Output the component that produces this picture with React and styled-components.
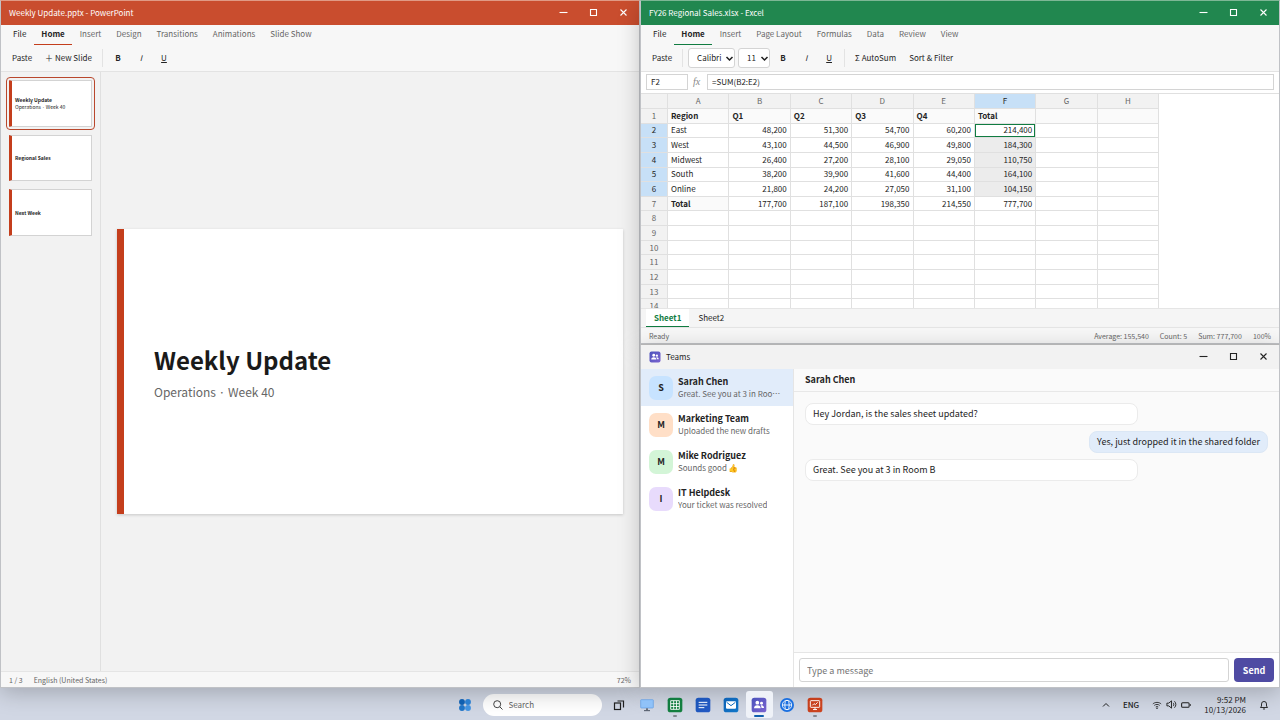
import React from 'react';
import styled, { createGlobalStyle, css } from 'styled-components';

const GlobalStyle = createGlobalStyle`
  * {
    box-sizing: border-box;
  }
  html, body, #root {
    height: 100%;
    margin: 0;
  }
  body, button, input, select {
    font-family: "Noto Sans CJK JP", "Noto Color Emoji", sans-serif;
    font-size: 8px;
    color: #242424;
  }
  button {
    border: 0;
    padding: 0;
    background: none;
  }
  h1, h2, p, ul {
    margin: 0;
    padding: 0;
    list-style: none;
  }
`;

const Desktop = styled.div`
  height: 100vh;
  display: flex;
  flex-direction: column;
  background: #d1d7e4;
  overflow: hidden;
`;

const Windows = styled.main`
  flex: 1;
  min-height: 0;
  display: grid;
  grid-template-columns: 1fr 1fr;
  grid-template-rows: 1fr 1fr;
`;

const Window = styled.section`
  grid-row: ${(props) => (props.$tall ? 'span 2' : 'auto')};
  position: relative;
  display: flex;
  flex-direction: column;
  min-width: 0;
  min-height: 0;
  border: 1px solid #c0c2c6;
  border-top-color: ${(props) => props.$edge};
  background: #fff;
  box-shadow: 0 5px 21px rgba(0, 0, 0, 0.22);
`;

const TitleBar = styled.header`
  flex: none;
  height: 24px;
  display: flex;
  align-items: center;
  gap: 5px;
  padding: 0 1px 1px 8px;
  background: ${(props) => props.$bg};
  color: ${(props) => props.$fg};
`;

const Title = styled.h1`
  flex: 1;
  font-size: 8px;
  font-weight: 400;
`;

const CaptionRow = styled.div`
  display: flex;
`;

const CaptionButton = styled.button`
  width: 30px;
  height: 23px;
  display: grid;
  place-items: center;
  color: inherit;
`;

const Tabs = styled.nav`
  flex: none;
  height: 20px;
  display: flex;
  gap: 1px;
  padding: 0 5px;
  background: #f7f7f7;
`;

const Tab = styled.button`
  padding: 0 7px 2px;
  border-bottom: 1px solid transparent;
  color: #666;
  ${(props) => props.$dark && css`color: #242424;`}
  ${(props) =>
    props.$accent &&
    css`
      color: #242424;
      font-weight: 600;
      border-bottom-color: ${props.$accent};
    `}
`;

const Toolbar = styled.div`
  flex: none;
  height: 27px;
  display: flex;
  align-items: center;
  gap: 1px;
  padding: 0 5px;
  background: #f7f7f7;
  border-bottom: 1px solid #e3e3e3;
`;

const Tool = styled.button`
  min-width: 22px;
  height: 20px;
  padding: 0 6px 1px;
  font-weight: ${(props) => (props.$bold ? 700 : 400)};
  font-style: ${(props) => (props.$italic ? 'italic' : 'normal')};
  text-decoration: ${(props) => (props.$underline ? 'underline' : 'none')};
`;

const Divider = styled.span`
  width: 1px;
  height: 18px;
  margin: 0 3px;
  background: #e3e3e3;
`;

const SelectBox = styled.label`
  display: grid;
  align-items: center;
  margin: 0 1px;

  > * {
    grid-area: 1 / 1;
  }
  svg {
    justify-self: end;
    margin-right: 1px;
    pointer-events: none;
  }
`;

const Select = styled.select`
  appearance: none;
  width: ${(props) => props.$width};
  height: 20px;
  padding: 0 8px 1px;
  border: 1px solid #d4d4d4;
  border-radius: 3px;
  background: #fff;
`;

const StatusBar = styled.footer`
  flex: none;
  height: 16px;
  display: flex;
  align-items: center;
  gap: 11px;
  padding: 0 8px;
  border-top: 1px solid #e5e5e5;
  background: #f7f7f7;
  color: #666;
  font-size: 7px;
`;

const Spacer = styled.span`
  flex: 1;
`;

/* PowerPoint */

const DeckBody = styled.div`
  flex: 1;
  min-height: 0;
  display: flex;
  background: #f2f2f2;
`;

const ThumbRail = styled.aside`
  flex: none;
  width: 100px;
  display: flex;
  flex-direction: column;
  gap: 8px;
  padding: 8px;
  border-right: 1px solid #e0e0e0;
`;

const Thumb = styled.button`
  aspect-ratio: 16 / 9;
  display: flex;
  flex-direction: column;
  justify-content: center;
  padding: 0 3px 1px;
  border: 1px solid #d3d3d3;
  border-left: 3px solid #c43e1c;
  background: #fff;
  font-size: 5px;
  line-height: 7px;
  text-align: left;
  ${(props) =>
    props.$active &&
    css`
      border-radius: 1px;
      outline: 1px solid #b9472c;
      outline-offset: 2px;
    `}
`;

const Canvas = styled.div`
  flex: 1;
  display: grid;
  align-items: center;
  padding: 16px;
`;

const Slide = styled.article`
  aspect-ratio: 16 / 9;
  display: flex;
  flex-direction: column;
  justify-content: center;
  gap: 6px;
  padding: 0 30px 1px;
  border-left: 7px solid #c43e1c;
  background: #fff;
  box-shadow: 0 1px 3px rgba(0, 0, 0, 0.18);
`;

const SlideTitle = styled.h2`
  font-size: 24px;
  line-height: 35px;
  font-weight: 600;
  color: #1a1a1a;
`;

const SlideText = styled.p`
  font-size: 12px;
  line-height: 17px;
  color: #666;
`;

/* Excel */

const FormulaBar = styled.div`
  flex: none;
  display: flex;
  align-items: center;
  gap: 5px;
  padding: 2px 5px 3px;
  border-bottom: 1px solid #e0e0e0;
`;

const Cell = styled.input`
  height: 16px;
  min-width: 0;
  padding: 0 4px 1px;
  border: 1px solid #d4d4d4;
  background: #fff;
  ${(props) => (props.$wide ? 'flex: 1;' : 'width: 42px;')}
`;

const Fx = styled.span`
  width: 9px;
  font-family: "Liberation Serif", serif;
  font-size: 10px;
  line-height: 12px;
  font-style: italic;
  color: #888;
`;

const SheetArea = styled.div`
  flex: 1;
  min-height: 0;
  overflow: hidden;
`;

const Sheet = styled.table`
  width: 518px;
  height: 220px;
  table-layout: fixed;
  border-collapse: separate;
  border-spacing: 0;
  line-height: 12px;

  thead th {
    height: 15px;
  }
  th, td {
    padding: 0 3px;
    border-right: 1px solid #e0e0e0;
    border-bottom: 1px solid #e0e0e0;
    white-space: nowrap;
  }
`;

const HeadCell = styled.th`
  width: ${(props) => props.$width || 'auto'};
  font-weight: 400;
  color: ${(props) => (props.$on ? '#242424' : '#666')};
  background: ${(props) => (props.$on ? '#c7e0f7' : '#f2f2f2')};
`;

const DataCell = styled.td`
  text-align: ${(props) => (props.$num ? 'right' : 'left')};
  font-weight: ${(props) => (props.$bold ? 700 : 400)};
  ${(props) => props.$shade && css`background: ${props.$shade};`}
  ${(props) => props.$cursor && css`box-shadow: inset 0 0 0 1px #107c41;`}
`;

const SheetTabs = styled.div`
  flex: none;
  height: 19px;
  display: flex;
  gap: 1px;
  padding: 0 5px;
  border-top: 1px solid #e5e5e5;
  background: #f5f5f5;
`;

const SheetTab = styled.button`
  padding: 0 8px;
  border-bottom: 1px solid transparent;
  ${(props) =>
    props.$active &&
    css`
      background: #fff;
      color: #107c41;
      font-weight: 600;
      border-bottom-color: #107c41;
    `}
`;

/* Teams */

const TeamsBody = styled.div`
  flex: 1;
  min-height: 0;
  display: flex;
`;

const ChatList = styled.ul`
  flex: none;
  width: 153px;
  border-right: 1px solid #e5e5e5;
`;

const ChatRow = styled.button`
  width: 100%;
  height: 37px;
  display: flex;
  align-items: center;
  gap: 5px;
  padding: 0 12px 0 8px;
  text-align: left;
  background: ${(props) => (props.$active ? '#e1ecfa' : 'transparent')};
`;

const Avatar = styled.span`
  flex: none;
  width: 24px;
  height: 24px;
  display: grid;
  place-items: center;
  border-radius: 7px;
  background: ${(props) => props.$bg};
  font-size: 9px;
  font-weight: 600;
`;

const ChatText = styled.span`
  min-width: 0;
  display: flex;
  flex-direction: column;
  line-height: 12px;

  strong {
    font-size: 9px;
    font-weight: 600;
  }
  span {
    overflow: hidden;
    white-space: nowrap;
    text-overflow: ellipsis;
    color: #666;
  }
`;

const Conversation = styled.div`
  flex: 1;
  min-width: 0;
  display: flex;
  flex-direction: column;
  background: #fafafa;
`;

const ChatHeader = styled.h2`
  flex: none;
  height: 23px;
  padding: 0 11px;
  border-bottom: 1px solid #e8e8e8;
  font-size: 9px;
  line-height: 22px;
  font-weight: 600;
`;

const Messages = styled.div`
  flex: 1;
  display: flex;
  flex-direction: column;
  align-items: flex-start;
  gap: 6px;
  padding: 11px;
`;

const Bubble = styled.p`
  padding: 0 7px;
  border: 1px solid #ebebeb;
  border-radius: 8px;
  background: #fff;
  font-size: 9px;
  line-height: 20px;
  width: 72%;
  ${(props) =>
    props.$mine &&
    css`
      width: auto;
      align-self: flex-end;
      background: #e1ecfa;
      border-color: #dbe7f5;
    `}
`;

const Composer = styled.form`
  flex: none;
  display: flex;
  gap: 5px;
  padding: 5px;
  border-top: 1px solid #e5e5e5;
  background: #fff;
`;

const MessageInput = styled.input`
  flex: 1;
  min-width: 0;
  height: 24px;
  padding: 0 7px;
  border: 1px solid #d4d4d4;
  border-radius: 3px;
  font-size: 9px;

  &::placeholder {
    color: #757575;
  }
`;

const SendButton = styled.button`
  width: 40px;
  height: 24px;
  border-radius: 4px;
  background: #4f4ba3;
  color: #fff;
  font-size: 9px;
  font-weight: 600;
`;

/* Taskbar */

const Taskbar = styled.footer`
  flex: none;
  height: 32px;
  padding-top: 1px;
  display: grid;
  grid-template-columns: 1fr auto 1fr;
  align-items: center;
  background: #d1d7e4;
`;

const TaskItems = styled.div`
  grid-column: 2;
  display: flex;
  align-items: center;
  gap: 1px;
`;

const TaskButton = styled.button`
  position: relative;
  width: 27px;
  height: 27px;
  display: grid;
  place-items: center;
  border-radius: 3px;
  background: ${(props) => (props.$active ? '#eff2f8' : 'transparent')};

  ${(props) =>
    props.$open &&
    css`
      &::after {
        content: '';
        position: absolute;
        bottom: 1px;
        left: 50%;
        width: ${props.$active ? '10px' : '4px'};
        height: 2px;
        transform: translateX(-50%);
        border-radius: 1px;
        background: ${props.$active ? '#0f5fae' : '#858992'};
      }
    `}
`;

const SearchBox = styled.label`
  width: 119px;
  height: 22px;
  margin: 0 3px;
  padding: 0 10px;
  display: flex;
  align-items: center;
  gap: 6px;
  border-radius: 11px;
  background: #fff;

  input {
    flex: 1;
    min-width: 0;
    padding: 0;
    border: 0;
    background: none;
  }
  input::placeholder {
    color: #666;
  }
`;

const Tray = styled.div`
  display: flex;
  justify-content: flex-end;
  align-items: center;
  gap: 5px;
  padding-right: 7px;
`;

const TrayButton = styled.button`
  height: 24px;
  padding: 0 4px;
  display: flex;
  align-items: center;
  gap: 4px;
  text-align: right;
  line-height: 10px;
  font-weight: ${(props) => (props.$strong ? 500 : 400)};
`;

const Tile = ({ from, to, size = 16, children }) => {
  const id = `tile${from.slice(1)}`;
  return (
    <svg width={size} height={size} viewBox="0 0 24 24" fill="none">
      <defs>
        <linearGradient id={id} x1="0" y1="0" x2="1" y2="1">
          <stop offset="0" stopColor={from} />
          <stop offset="1" stopColor={to} />
        </linearGradient>
      </defs>
      <rect x="1" y="1" width="22" height="22" rx="4" fill={`url(#${id})`} />
      {children}
    </svg>
  );
};

const TeamsIcon = ({ size }) => (
  <Tile from="#4b53bc" to="#7b63cf" size={size}>
    <circle cx="9.5" cy="8.5" r="2.8" fill="#fff" />
    <circle cx="15.8" cy="9.3" r="2.2" fill="#fff" />
    <path d="M4.5 17c0-3 2-4.500 5-4.500s5 1.500 5 4.500z" fill="#fff" />
    <path d="M15.800 16.500c0-1.600-.4-2.700-1.300-3.800 3-.7 5 .8 5 3.800z" fill="#fff" />
  </Tile>
);

const ExcelIcon = () => (
  <Tile from="#107c41" to="#15803f">
    <path d="M5.500 5.500h13v13h-13zM5.500 10h13M5.500 14.300h13M10 5.500v13M14.300 5.500v13" stroke="#fff" strokeWidth="1.300" />
  </Tile>
);

const WriterIcon = () => (
  <Tile from="#1b55b8" to="#2459c4">
    <path d="M5.500 8h13M5.500 12h13M5.500 16h8.500" stroke="#fff" strokeWidth="1.500" />
  </Tile>
);

const MailIcon = () => (
  <Tile from="#0f62b5" to="#1177c9">
    <rect x="4.500" y="6.500" width="15" height="11" rx="1.500" fill="#fff" />
    <path d="M5.500 8l6.500 5 6.500-5" stroke="#0f6cbd" strokeWidth="1.500" />
  </Tile>
);

const SlidesIcon = () => (
  <Tile from="#c43e1c" to="#cc4420">
    <rect x="5" y="5.500" width="14" height="10" rx="1" stroke="#fff" strokeWidth="1.400" />
    <path d="M8 12.500l2.500-2.500 2 1.500 3.500-3.500M12 15.500v3M9 18.800h6" stroke="#fff" strokeWidth="1.400" />
  </Tile>
);

const GlobeIcon = () => (
  <svg width="16" height="16" viewBox="0 0 24 24" fill="none" stroke="#fff" strokeWidth="1.300">
    <circle cx="12" cy="12" r="10.500" fill="#1a6fe0" stroke="none" />
    <circle cx="12" cy="12" r="7" />
    <ellipse cx="12" cy="12" rx="3.200" ry="7" />
    <path d="M5 12h14" />
  </svg>
);

const MonitorIcon = () => (
  <svg width="16" height="16" viewBox="0 0 24 24" fill="none">
    <rect x="2.500" y="4" width="19" height="12.500" rx="1" fill="#90c2f9" stroke="#5d9ce2" />
    <path d="M12 17v3" stroke="#6b7280" strokeWidth="3" />
    <path d="M7.500 20.500h9" stroke="#4b5563" strokeWidth="1.500" />
  </svg>
);

const StartIcon = () => (
  <svg width="16" height="16" viewBox="0 0 24 24">
    <circle cx="7.500" cy="7.500" r="4.400" fill="#0f5fb0" />
    <circle cx="16.500" cy="7.500" r="4.400" fill="#2b7fd0" />
    <circle cx="7.500" cy="16.500" r="4.400" fill="#1f74c6" />
    <circle cx="16.500" cy="16.500" r="4.400" fill="#4292de" />
  </svg>
);

const TaskViewIcon = () => (
  <svg width="12" height="12" viewBox="0 0 12 12" fill="none" stroke="#1f1f1f" strokeWidth="1.200">
    <rect x="1.500" y="4" width="6" height="6.500" />
    <path d="M4.500 2h6v6.500" />
  </svg>
);

const SearchIcon = () => (
  <svg width="10" height="10" viewBox="0 0 10 10" fill="none" stroke="#444">
    <circle cx="4.200" cy="4.200" r="3.500" />
    <path d="M6.800 6.800L9.500 9.500" />
  </svg>
);

const Chevron = () => (
  <svg width="9" height="9" viewBox="0 0 9 9" fill="none" stroke="#1f1f1f" strokeWidth="1.500">
    <path d="M1.500 3l3 3 3-3" />
  </svg>
);

const captionIcons = [
  ['Minimize', 'M0.500 4.500h8'],
  ['Maximize', 'M1.500 1.500h6v6h-6z'],
  ['Close', 'M1.500 1.500l6 6M7.500 1.500l-6 6'],
];

const WindowBar = ({ title, bg, fg = '#fff', icon }) => (
  <TitleBar $bg={bg} $fg={fg}>
    {icon}
    <Title>{title}</Title>
    <CaptionRow>
      {captionIcons.map(([name, d]) => (
        <CaptionButton key={name} aria-label={name}>
          <svg width="9" height="9" viewBox="0 0 9 9" fill="none" stroke="currentColor" strokeWidth="1.100">
            <path d={d} />
          </svg>
        </CaptionButton>
      ))}
    </CaptionRow>
  </TitleBar>
);

const RibbonTabs = ({ names, accent }) => (
  <Tabs>
    {names.map((name) => (
      <Tab key={name} $dark={name === 'File'} $accent={name === 'Home' ? accent : undefined}>
        {name}
      </Tab>
    ))}
  </Tabs>
);

const FormatTools = () => (
  <>
    <Tool $bold>B</Tool>
    <Tool $italic>I</Tool>
    <Tool $underline>U</Tool>
  </>
);

const slides = [
  { title: 'Weekly Update', text: 'Operations · Week 40' },
  { title: 'Regional Sales' },
  { title: 'Next Week' },
];

const PowerPoint = () => (
  <Window $tall $edge="#e09a85">
    <WindowBar title="Weekly Update.pptx - PowerPoint" bg="#c94d2e" />
    <RibbonTabs
      accent="#c43e1c"
      names={['File', 'Home', 'Insert', 'Design', 'Transitions', 'Animations', 'Slide Show']}
    />
    <Toolbar>
      <Tool>Paste</Tool>
      <Tool>＋ New Slide</Tool>
      <Divider />
      <FormatTools />
    </Toolbar>
    <DeckBody>
      <ThumbRail>
        {slides.map((slide, i) => (
          <Thumb key={slide.title} $active={i === 0}>
            <strong>{slide.title}</strong>
            {slide.text && <span>{slide.text}</span>}
          </Thumb>
        ))}
      </ThumbRail>
      <Canvas>
        <Slide>
          <SlideTitle>{slides[0].title}</SlideTitle>
          <SlideText>{slides[0].text}</SlideText>
        </Slide>
      </Canvas>
    </DeckBody>
    <StatusBar>
      <span>1 / 3</span>
      <span>English (United States)</span>
      <Spacer />
      <span>72%</span>
    </StatusBar>
  </Window>
);

const columns = ['A', 'B', 'C', 'D', 'E', 'F', 'G', 'H'];
const data = [
  ['Region', 'Q1', 'Q2', 'Q3', 'Q4', 'Total'],
  ['East', '48,200', '51,300', '54,700', '60,200', '214,400'],
  ['West', '43,100', '44,500', '46,900', '49,800', '184,300'],
  ['Midwest', '26,400', '27,200', '28,100', '29,050', '110,750'],
  ['South', '38,200', '39,900', '41,600', '44,400', '164,100'],
  ['Online', '21,800', '24,200', '27,050', '31,100', '104,150'],
  ['Total', '177,700', '187,100', '198,350', '214,550', '777,700'],
];
const rows = Array.from({ length: 14 }, (_, i) => data[i] || []);

const inSelection = (r, c) => c === 5 && r >= 1 && r <= 5;

const cellShade = (r, c) => {
  if (r === 0 || (r === 6 && c === 0)) return '#fafafa';
  if (inSelection(r, c) && r > 1) return '#ececec';
  return undefined;
};

const Excel = () => (
  <Window $edge="#7db795">
    <WindowBar title="FY26 Regional Sales.xlsx - Excel" bg="#21874f" />
    <RibbonTabs
      accent="#107c41"
      names={['File', 'Home', 'Insert', 'Page Layout', 'Formulas', 'Data', 'Review', 'View']}
    />
    <Toolbar>
      <Tool>Paste</Tool>
      <Divider />
      <SelectBox>
        <Select $width="47px" aria-label="Font">
          <option>Calibri</option>
        </Select>
        <Chevron />
      </SelectBox>
      <SelectBox>
        <Select $width="32px" aria-label="Font size">
          <option>11</option>
        </Select>
        <Chevron />
      </SelectBox>
      <FormatTools />
      <Divider />
      <Tool>Σ AutoSum</Tool>
      <Tool>Sort &amp; Filter</Tool>
    </Toolbar>
    <FormulaBar>
      <Cell aria-label="Name box" defaultValue="F2" />
      <Fx>fx</Fx>
      <Cell $wide aria-label="Formula" defaultValue="=SUM(B2:E2)" />
    </FormulaBar>
    <SheetArea>
      <Sheet>
        <thead>
          <tr>
            <HeadCell $width="27px" />
            {columns.map((name) => (
              <HeadCell key={name} $on={name === 'F'}>{name}</HeadCell>
            ))}
          </tr>
        </thead>
        <tbody>
          {rows.map((row, r) => (
            <tr key={r}>
              <HeadCell $on={inSelection(r, 5)}>{r + 1}</HeadCell>
              {columns.map((name, c) => (
                <DataCell
                  key={name}
                  $num={r > 0 && c > 0}
                  $bold={r === 0 || (r === 6 && c === 0)}
                  $shade={cellShade(r, c)}
                  $cursor={r === 1 && c === 5}
                >
                  {row[c]}
                </DataCell>
              ))}
            </tr>
          ))}
        </tbody>
      </Sheet>
    </SheetArea>
    <SheetTabs>
      <SheetTab $active>Sheet1</SheetTab>
      <SheetTab>Sheet2</SheetTab>
    </SheetTabs>
    <StatusBar>
      <span>Ready</span>
      <Spacer />
      <span>Average: 155,540</span>
      <span>Count: 5</span>
      <span>Sum: 777,700</span>
      <span>100%</span>
    </StatusBar>
  </Window>
);

const chats = [
  { name: 'Sarah Chen', last: 'Great. See you at 3 in Room B', bg: '#c7e3ff' },
  { name: 'Marketing Team', last: 'Uploaded the new drafts', bg: '#ffdfc7' },
  { name: 'Mike Rodriguez', last: 'Sounds good 👍', bg: '#d3f5d7' },
  { name: 'IT Helpdesk', last: 'Your ticket was resolved', bg: '#e8dbfc' },
];

const Teams = () => (
  <Window $edge="#b4b4b4">
    <WindowBar title="Teams" bg="#f2f2f2" fg="#242424" icon={<TeamsIcon size={12} />} />
    <TeamsBody>
      <ChatList>
        {chats.map((chat, i) => (
          <li key={chat.name}>
            <ChatRow $active={i === 0}>
              <Avatar $bg={chat.bg}>{chat.name[0]}</Avatar>
              <ChatText>
                <strong>{chat.name}</strong>
                <span>{chat.last}</span>
              </ChatText>
            </ChatRow>
          </li>
        ))}
      </ChatList>
      <Conversation>
        <ChatHeader>Sarah Chen</ChatHeader>
        <Messages>
          <Bubble>Hey Jordan, is the sales sheet updated?</Bubble>
          <Bubble $mine>Yes, just dropped it in the shared folder</Bubble>
          <Bubble>Great. See you at 3 in Room B</Bubble>
        </Messages>
        <Composer onSubmit={(e) => e.preventDefault()}>
          <MessageInput aria-label="Message" placeholder="Type a message" />
          <SendButton>Send</SendButton>
        </Composer>
      </Conversation>
    </TeamsBody>
  </Window>
);

const apps = [
  { name: 'Task view', icon: <TaskViewIcon /> },
  { name: 'Computer', icon: <MonitorIcon /> },
  { name: 'Excel', icon: <ExcelIcon />, open: true },
  { name: 'Writer', icon: <WriterIcon /> },
  { name: 'Mail', icon: <MailIcon /> },
  { name: 'Teams', icon: <TeamsIcon size={16} />, open: true, active: true },
  { name: 'Browser', icon: <GlobeIcon /> },
  { name: 'PowerPoint', icon: <SlidesIcon />, open: true },
];

const App = () => {
  return (
    <Desktop>
      <GlobalStyle />
      <Windows>
        <PowerPoint />
        <Excel />
        <Teams />
      </Windows>
      <Taskbar>
        <TaskItems>
          <TaskButton aria-label="Start"><StartIcon /></TaskButton>
          <SearchBox>
            <SearchIcon />
            <input aria-label="Search" placeholder="Search" />
          </SearchBox>
          {apps.map((app) => (
            <TaskButton key={app.name} aria-label={app.name} $open={app.open} $active={app.active}>
              {app.icon}
            </TaskButton>
          ))}
        </TaskItems>
        <Tray>
          <TrayButton aria-label="Hidden icons">
            <svg width="8" height="8" viewBox="0 0 8 8" fill="none" stroke="#1f1f1f">
              <path d="M1 5.500l3-3 3 3" />
            </svg>
          </TrayButton>
          <TrayButton $strong>ENG</TrayButton>
          <TrayButton aria-label="Network, sound, battery">
            <svg width="10" height="10" viewBox="0 0 24 24" fill="none" stroke="#1f1f1f" strokeWidth="2">
              <path d="M2 9.500c5.500-5 14.500-5 20 0M5.500 13c3.500-3.200 9.500-3.200 13 0M9 16.500c1.700-1.500 4.300-1.500 6 0" />
              <circle cx="12" cy="19.500" r="1" fill="#1f1f1f" />
            </svg>
            <svg width="11" height="11" viewBox="0 0 24 24" fill="none" stroke="#1f1f1f" strokeWidth="2">
              <path d="M2 9h4l6-5v16l-6-5H2zM15.500 8.500c2 2 2 5 0 7M18.500 5c4 4 4 10 0 14" />
            </svg>
            <svg width="10" height="10" viewBox="0 0 24 24" fill="none" stroke="#1f1f1f" strokeWidth="2.500">
              <rect x="1.500" y="6.500" width="18" height="11" rx="2.500" />
              <path d="M22.500 10v4" />
            </svg>
          </TrayButton>
          <TrayButton>
            9:52 PM
            <br />
            10/13/2026
          </TrayButton>
          <TrayButton aria-label="Notifications">
            <svg width="10" height="10" viewBox="0 0 24 24" fill="none" stroke="#1f1f1f" strokeWidth="2.200">
              <path d="M3.500 18h17L18 14.500V9.500a6 6 0 0 0-12 0v5zM9.500 21.500h5" />
            </svg>
          </TrayButton>
        </Tray>
      </Taskbar>
    </Desktop>
  );
};

export default App;
